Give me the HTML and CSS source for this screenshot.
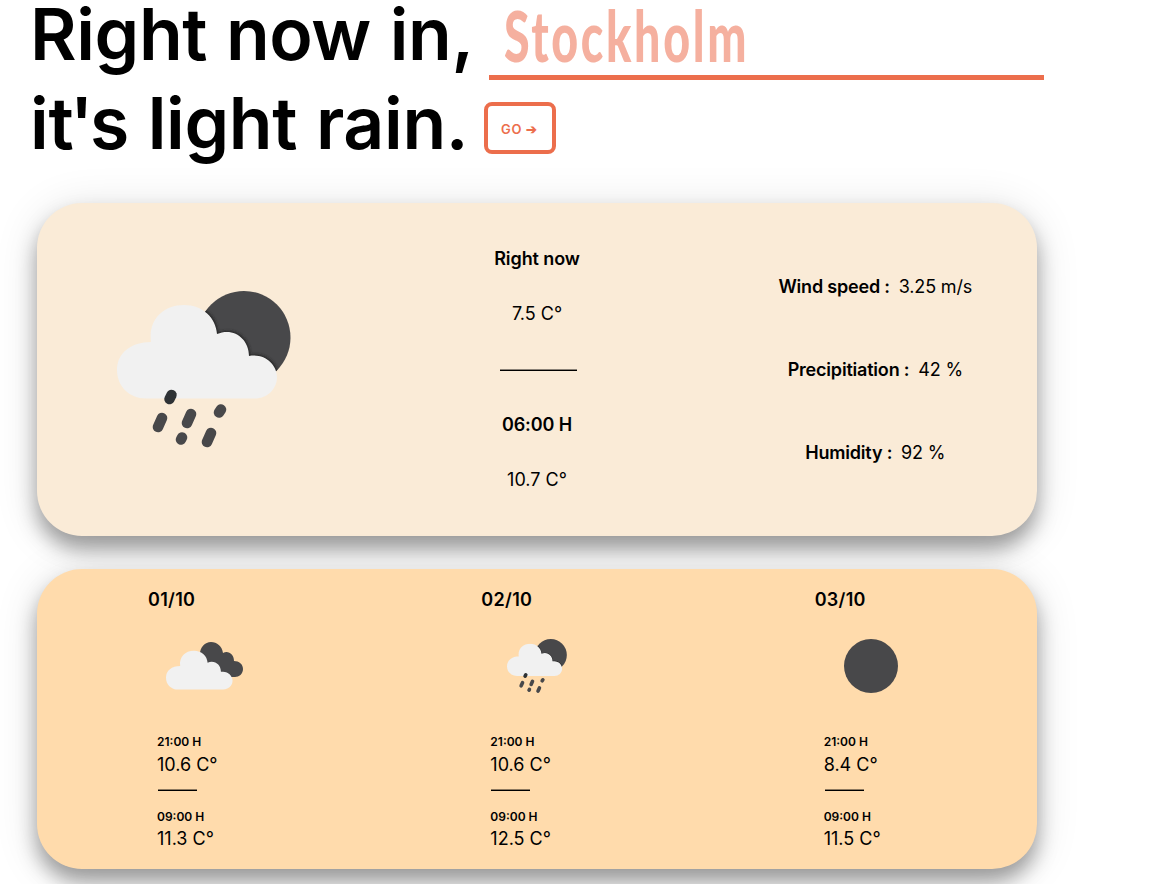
FILE: index.html
```
<!DOCTYPE html>
<html lang="en">
<head>
<meta charset="utf-8">
<title>Weather</title>
<link rel="stylesheet" href="styles.css">
</head>
<body>
<svg class="defs" width="0" height="0" aria-hidden="true">
  <defs>
    <filter id="soft" x="-20%" y="-20%" width="140%" height="140%"><feGaussianBlur stdDeviation="1.8"/></filter>
    <symbol id="cloud" viewBox="0 0 161 95">
      <path d="M29 94.500C12 94.500 0 82 0 66C0 49 14 38 34 38C31 16 46 1 67 1C86 1 99 14 100 30C117 23 132 35 132 52C148 49 160 61 160 73C160 86 149 94.500 138 94.500Z"/>
    </symbol>
    <symbol id="rain" viewBox="0 0 174 157">
      <clipPath id="moon-clip"><circle cx="127" cy="46.500" r="46.500"/></clipPath>
      <circle cx="127" cy="46.500" r="46.500" fill="#48484a"/>
      <g clip-path="url(#moon-clip)"><use href="#cloud" x="1" y="12" width="161" height="95" fill="#222" filter="url(#soft)"/></g>
      <use href="#cloud" x="0" y="13" width="161" height="95" fill="#f1f1f1"/>
      <g stroke="#48484a" stroke-width="10.500" stroke-linecap="round">
        <path d="M52.500 108l2-4" stroke="#2e3235"/>
        <path d="M41 136l4-9M70 132l4-9M90 151l4-9M102 121.500l2-3M64 148.500l1-2"/>
      </g>
    </symbol>
    <symbol id="clouds" viewBox="0 0 77 48">
      <path fill="#48484a" d="M34 12C34 5 39 0 45 0C51 0 56 4 57 11C62 8 68 12 68 19C73 19 77 22 77 27C77 32 73 35 69 35H48Z"/>
      <use href="#cloud" x="0" y="7.500" width="67" height="41" fill="#f1f1f1"/>
    </symbol>
  </defs>
</svg>
<main>
  <form class="heading">
    <div class="line"><span class="lead">Right now in,</span><span class="field"><span class="city">Stockholm</span></span></div>
    <div class="line second"><span>i<span class="tight">t'</span>s light rain.</span><button type="button">GO ➔</button></div>
  </form>
  <section class="card now">
    <svg class="hero"><use href="#rain"/></svg>
    <div class="temps">
      <b>Right now</b><span>7.5 C°</span><span class="rule"></span><b>06:00 H</b><span>10.7 C°</span>
    </div>
    <div class="details">
      <p><b>Wind speed :</b> 3.25 m/s</p>
      <p><b>Precipitiation :</b> 42 %</p>
      <p><b>Humidity :</b> 92 %</p>
    </div>
  </section>
  <section class="card days">
    <article>
      <h2>01/10</h2>
      <div class="icon"><svg class="clouds"><use href="#clouds"/></svg></div>
      <div class="slots"><b>21:00 H</b><span>10.6 C°</span><i class="rule"></i><b>09:00 H</b><span>11.3 C°</span></div>
    </article>
    <article>
      <h2>02/10</h2>
      <div class="icon"><svg class="rain"><use href="#rain"/></svg></div>
      <div class="slots"><b>21:00 H</b><span>10.6 C°</span><i class="rule"></i><b>09:00 H</b><span>12.5 C°</span></div>
    </article>
    <article>
      <h2>03/10</h2>
      <div class="icon"><svg class="moon" viewBox="0 0 54 54"><circle cx="27" cy="27" r="27" fill="#48484a"/></svg></div>
      <div class="slots"><b>21:00 H</b><span>8.4 C°</span><i class="rule"></i><b>09:00 H</b><span>11.5 C°</span></div>
    </article>
  </section>
</main>
</body>
</html>
```
FILE: styles.css
```
* { box-sizing: border-box; }
html { overflow: hidden; }
body { margin: 0; height: 884px; overflow: hidden; background: #fff; color: #000; font: 18px/22px Inter, sans-serif; }
.defs { position: absolute; }
b, h2 { font-weight: 600; }
p, h2 { margin: 0; }
.heading { height: 203px; padding-left: 30px; font-size: 71.500px; font-weight: 600; letter-spacing: -.4px; word-spacing: 1.200px; }
.line { display: flex; height: 89px; line-height: 69px; white-space: nowrap; }
.lead { line-height: 68px; }
.field { width: 555px; height: 80px; margin-left: 15px; padding-left: 15px; border-bottom: 5px solid #ec6e4c; color: #f5b09f; }
.city { display: block; width: 400px; font: 900 70px/70px Lato, sans-serif; letter-spacing: 4px; transform: scaleX(.665); transform-origin: left; }
.second { letter-spacing: -.35px; }
.tight { letter-spacing: -3.500px; }
button { width: 72px; height: 52px; margin: 13px 0 0 16px; padding: 1px 2px 0 0; border: 4px solid #ec6e4c; border-radius: 8px; background: none; color: #ec6e4c; font: 600 13px Inter, sans-serif; letter-spacing: .6px; }
.card { display: grid; grid-template-columns: repeat(3, 1fr); width: 1000px; margin-left: 37px; border-radius: 45px; box-shadow: 0 13px 20px rgba(0,0,0,.35), 0 5px 45px rgba(0,0,0,.12); }
.now { height: 333px; background: #faebd7; }
.hero { width: 174px; height: 157px; margin: 88px 0 0 80px; }
.temps { display: flex; flex-direction: column; align-items: center; justify-content: center; gap: 33.300px; }
.temps b { letter-spacing: -.1px; }
.temps .rule { width: 77px; height: 22px; padding: 10px 0 0 2px; }
.rule::before { content: ""; display: block; width: 100%; height: 2px; background: linear-gradient(rgba(0,0,0,.45) 50%, #000 50%); }
.temps .rule::before { width: 77px; }
.details { display: flex; flex-direction: column; align-items: center; justify-content: center; gap: 61px; padding-left: 10px; letter-spacing: -.15px; }
.details b { margin-right: 4px; letter-spacing: -.2px; }
.days { height: 300px; margin-top: 33px; background: #ffdbac; }
.days article { padding: 20px 0 0 111px; }
h2 { font-size: 18px; line-height: 22px; letter-spacing: .3px; }
.icon { display: flex; align-items: center; justify-content: center; width: 120px; height: 100px; margin: 5px 0 0 -4px; }
.clouds { width: 77px; height: 48px; }
.rain { width: 60px; height: 56px; }
.moon { width: 54px; height: 54px; }
.slots { display: flex; flex-direction: column; margin: 18px 0 0 9px; }
.slots b { font-size: 12px; line-height: 16px; }
.slots span { line-height: 22px; margin-top: 4px; }
.slots .rule { width: 39px; height: 16px; padding-top: 8px; margin: 5px 0 12px 1px; }
.slots .rule + b + span { margin-top: 3px; }
```
